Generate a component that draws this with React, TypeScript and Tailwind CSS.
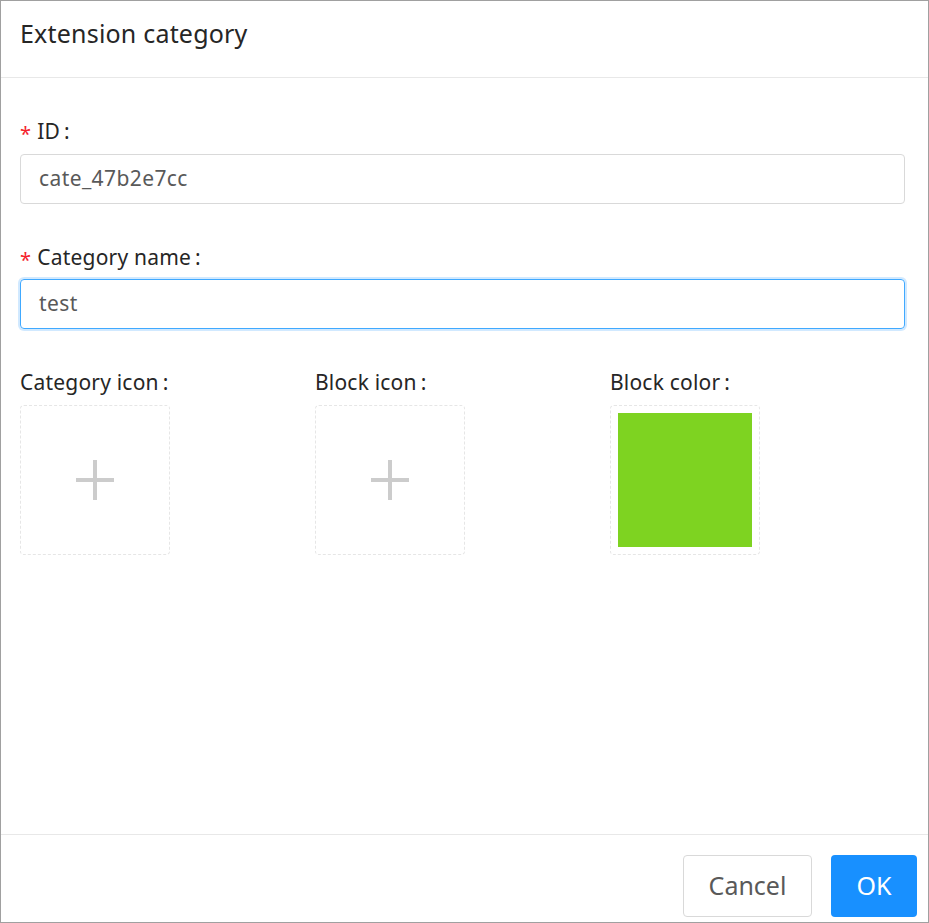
import React from "react";

const font = { fontFamily: '"Noto Sans", "Segoe UI", sans-serif' };

function Label({ text, required }: { text: string; required?: boolean }) {
  return (
    <div className="h-[27px] leading-[27px] text-[21px] tracking-[0.2px] text-[#262626] flex items-center">
      {required && (
        <span className="text-[#f5222d] text-[20px] mr-[6px] leading-none translate-y-[2px]">*</span>
      )}
      <span>{text}</span>
      <span className="ml-[4px]">:</span>
    </div>
  );
}

function Plus() {
  return (
    <svg width="40" height="40" viewBox="0 0 40 40">
      <rect x="1" y="18" width="38" height="4" fill="#cccccc" />
      <rect x="18" y="0" width="4" height="40" fill="#cccccc" />
    </svg>
  );
}

export default function App() {
  return (
    <div style={font} className="w-[929px] h-[923px] border border-[#a0a0a0] bg-white flex flex-col">
      <div className="h-[77px] border-b border-[#e8e8e8] px-[19px] flex items-center pb-[10px]">
        <span className="text-[25px] tracking-[0.2px] text-[#262626]">Extension category</span>
      </div>
      <div className="flex-1 pl-[19px] pr-[23px] pt-[40px]">
        <Label text="ID" required />
        <div className="mt-[9px] h-[50px] border border-[#d9d9d9] rounded-[4px] px-[18px] flex items-center text-[21px] tracking-[0.4px] text-[#595959]">
          cate_47b2e7cc
        </div>
        <div className="mt-[40px]">
          <Label text="Category name" required />
        </div>
        <div className="mt-[8px] h-[50px] border border-[#40a9ff] rounded-[4px] px-[18px] flex items-center text-[21px] tracking-[0.4px] text-[#595959] shadow-[0_0_0_2px_rgba(24,144,255,0.2)]">
          test
        </div>
        <div className="mt-[40px] grid grid-cols-3">
          <div>
            <Label text="Category icon" />
            <div className="mt-[9px] w-[150px] h-[150px] border border-dashed border-[#e6e6e6] rounded-[4px] flex items-center justify-center">
              <Plus />
            </div>
          </div>
          <div>
            <Label text="Block icon" />
            <div className="mt-[9px] w-[150px] h-[150px] border border-dashed border-[#e6e6e6] rounded-[4px] flex items-center justify-center">
              <Plus />
            </div>
          </div>
          <div>
            <Label text="Block color" />
            <div className="mt-[9px] w-[150px] h-[150px] border border-dashed border-[#e6e6e6] rounded-[4px] p-[7px]">
              <div className="w-full h-full bg-[#7ed321]" />
            </div>
          </div>
        </div>
      </div>
      <div className="h-[88px] border-t border-[#e8e8e8] flex justify-end items-start pt-[20px] pr-[11px] gap-[19px]">
        <button className="w-[129px] h-[62px] border border-[#d9d9d9] rounded-[4px] bg-white text-[25px] text-[#595959]">
          Cancel
        </button>
        <button className="w-[86px] h-[62px] rounded-[4px] bg-[#1890ff] text-[25px] text-white">
          OK
        </button>
      </div>
    </div>
  );
}
